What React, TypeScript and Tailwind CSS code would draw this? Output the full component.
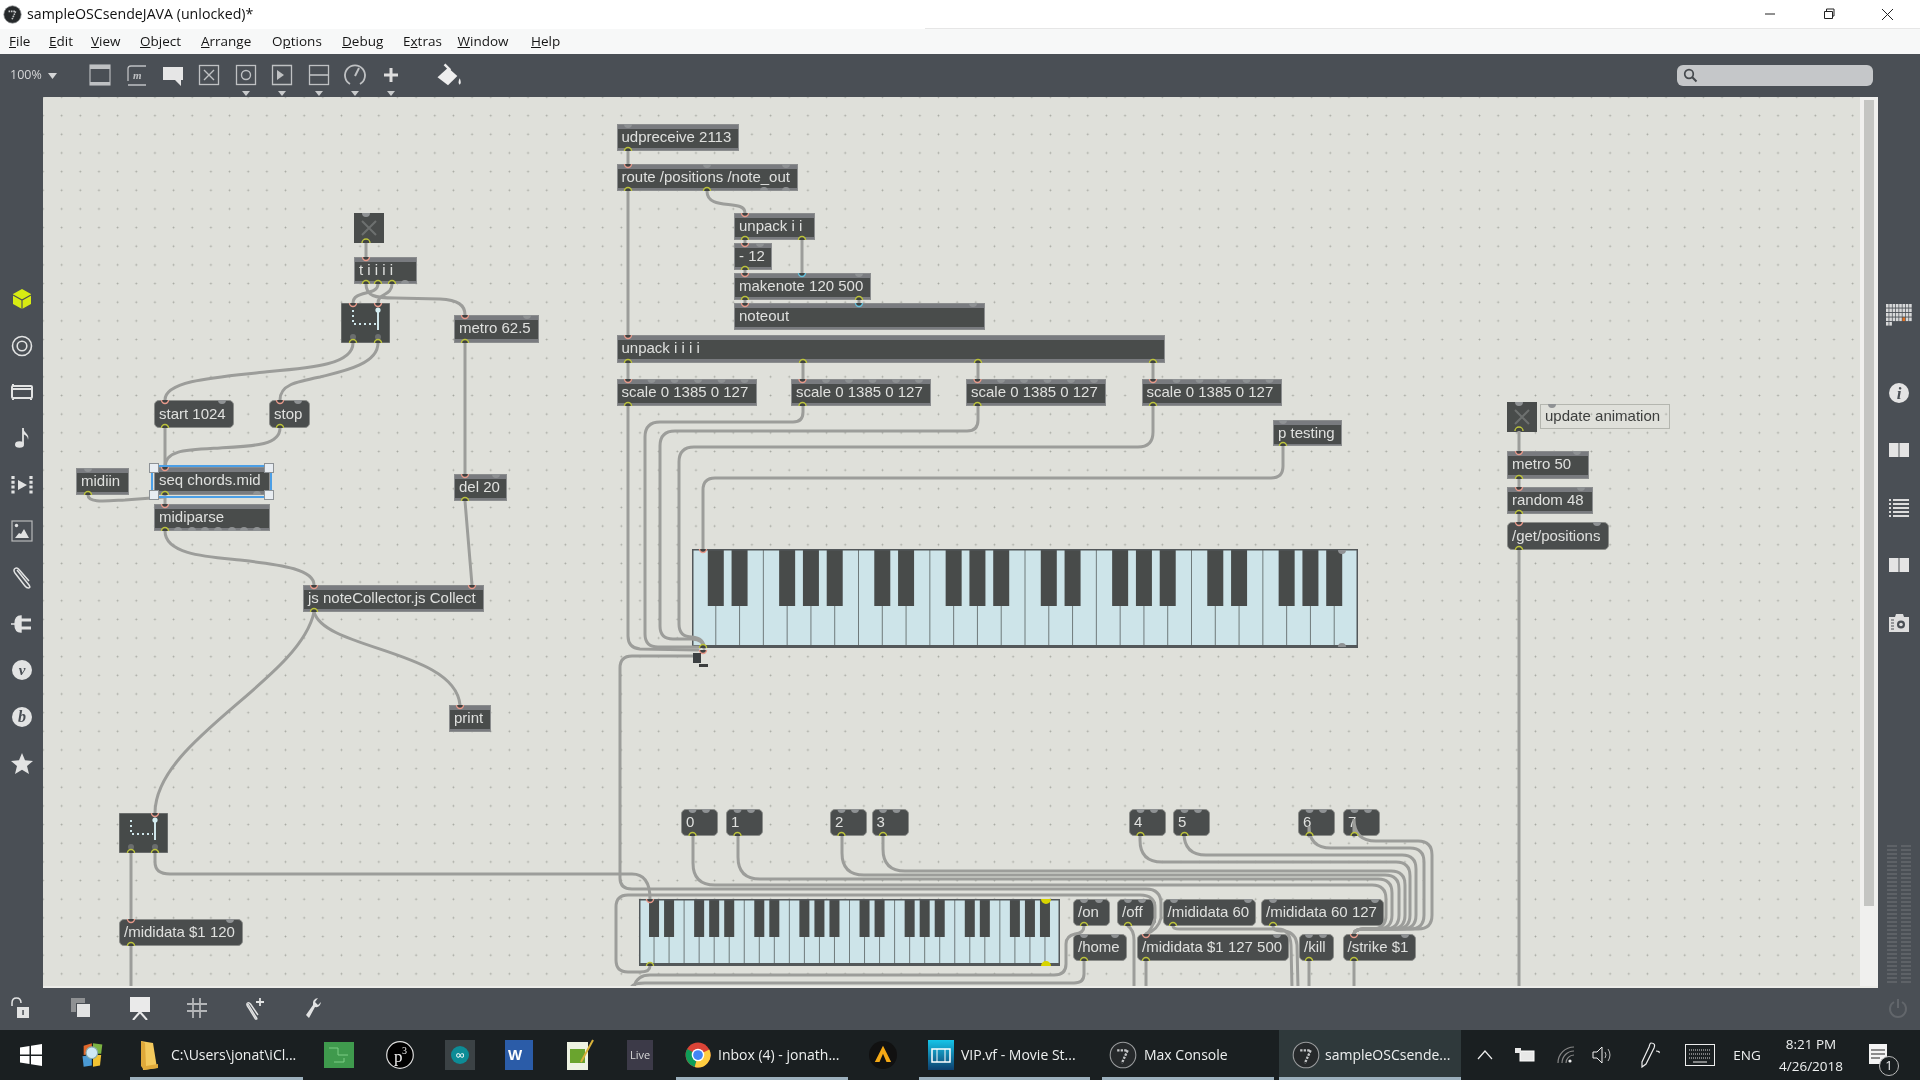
import React from "react";

type N = { t: string; x: number; y: number; r: number; b: number; k?: "o" | "m"; i?: number[]; o?: number[]; gi?: number[]; go?: number[]; cy?: number[] };

const scale = (x: number): N => ({ t: "scale 0 1385 0 127", x, y: 379, r: x + 140, b: 406, i: [x + 11.5], o: [x + 11.5], gi: [35, 58, 81.5, 105, 128].map((d) => x + d) });
const num = (t: string, x: number): N => ({ t, x, y: 809, r: x + 37, b: 836, k: "m", o: [x + 11.5], gi: [x + 11.5, x + 25] });

const nodes: N[] = [
  { t: "t i i i i", x: 354, y: 257, r: 417, b: 284, i: [366], o: [366, 378, 392], go: [405] },
  { t: "metro 62.5", x: 454, y: 315, r: 539, b: 343, i: [465], o: [465], gi: [527] },
  { t: "start 1024", x: 154, y: 400, r: 234, b: 428, k: "m", i: [165], o: [165], gi: [222] },
  { t: "stop", x: 269, y: 400, r: 310, b: 428, k: "m", i: [280], o: [280], gi: [298] },
  { t: "midiin", x: 76, y: 468, r: 129, b: 495, o: [88], gi: [88] },
  { t: "seq chords.mid", x: 154, y: 467, r: 270, b: 495, i: [165], o: [165], go: [257] },
  { t: "midiparse", x: 154, y: 504, r: 270, b: 531, i: [165], o: [165], go: [178, 192, 205, 218, 232, 244, 257] },
  { t: "del 20", x: 454, y: 474, r: 507, b: 501, i: [465], o: [465], gi: [496] },
  { t: "js noteCollector.js Collect", x: 303, y: 585, r: 484, b: 612, i: [314, 472], o: [314] },
  { t: "print", x: 449, y: 705, r: 491, b: 732, i: [460] },
  { t: "udpreceive 2113", x: 616.5, y: 124, r: 738.5, b: 151, o: [628], gi: [628] },
  { t: "route /positions /note_out", x: 616.5, y: 164, r: 797.5, b: 191, i: [628], o: [628, 707], gi: [707, 786], go: [764, 786] },
  { t: "unpack i i", x: 734, y: 213, r: 815, b: 240, i: [745], o: [745, 802] },
  { t: "- 12", x: 734, y: 243, r: 772, b: 270, i: [745], o: [745], gi: [760] },
  { t: "makenote 120 500", x: 734, y: 273, r: 871, b: 300, i: [745], cy: [802], o: [745, 859], gi: [859] },
  { t: "noteout", x: 734, y: 303, r: 985, b: 330, i: [745], cy: [859], gi: [973] },
  { t: "unpack i i i i", x: 616.5, y: 335, r: 1165, b: 363, i: [628], o: [628, 803, 978, 1153] },
  scale(616.5),
  scale(791),
  scale(966),
  scale(1141.5),
  { t: "p testing", x: 1273, y: 420, r: 1342, b: 446, o: [1283], gi: [1283] },
  num("0", 681),
  num("1", 726),
  num("2", 830),
  num("3", 871.5),
  num("4", 1129),
  num("5", 1173),
  num("6", 1298),
  num("7", 1343),
  { t: "/on", x: 1073, y: 899, r: 1109.5, b: 926, k: "m", o: [1084], gi: [1084, 1099] },
  { t: "/off", x: 1117, y: 899, r: 1155.5, b: 926, k: "m", o: [1128], gi: [1128, 1142] },
  { t: "/mididata 60", x: 1162.5, y: 899, r: 1256, b: 926, k: "m", o: [1173], gi: [1174, 1248] },
  { t: "/mididata 60 127", x: 1261, y: 899, r: 1384, b: 926, k: "m", o: [1273], gi: [1273, 1375] },
  { t: "/home", x: 1073, y: 934, r: 1127, b: 961, k: "m", o: [1084], gi: [1084, 1115] },
  { t: "/mididata $1 127 500", x: 1137, y: 934, r: 1289, b: 961, k: "m", i: [1146], o: [1146], gi: [1277] },
  { t: "/kill", x: 1299, y: 934, r: 1334, b: 961, k: "m", o: [1309], gi: [1309, 1323] },
  { t: "/strike $1", x: 1342.5, y: 934, r: 1416, b: 961, k: "m", i: [1354], o: [1354], gi: [1405] },
  { t: "/mididata $1 120", x: 119, y: 919, r: 243, b: 946, k: "m", i: [131], o: [131], gi: [230] },
  { t: "metro 50", x: 1507, y: 451, r: 1589, b: 479, i: [1519], o: [1519], gi: [1577] },
  { t: "random 48", x: 1507, y: 487, r: 1593, b: 514, i: [1519], o: [1519], gi: [1581] },
  { t: "/get/positions", x: 1507, y: 522, r: 1609, b: 550, k: "m", i: [1519], o: [1519], gi: [1597] },
];

const strike = [
  [693, 836, 885, 1386],
  [738, 836, 879, 1392],
  [842, 836, 875, 1399],
  [883, 836, 871, 1405],
  [1140, 836, 862, 1410],
  [1184, 836, 855, 1416],
  [1309, 836, 848, 1424],
  [1354, 836, 841, 1432],
].map(([x, y, h, v]) => `M${x} ${y} L${x} ${h - 22} Q${x} ${h} ${x + 22} ${h} L${v - 14} ${h} Q${v} ${h} ${v} ${h + 14} L${v} 915 Q${v} 929 ${v - 14} 929 L1364 929 Q1354 929 1354 934`);

const wires: string[] = [
  "M366 243 L366 257",
  "M366 284 C366 296 375 298 395 298 L440 299 C458 300 465 305 465 315",
  "M378 284 C378 296 353 290 353 303",
  "M392 284 C392 296 378 293 378 303",
  "M353 343 C353 365 310 368 265 372 C220 377 165 380 165 400",
  "M378 343 C378 365 340 372 320 377 C295 382 280 385 280 400",
  "M165 428 L165 467",
  "M280 428 C280 445 255 446 220 448 C185 450 165 450 165 467",
  "M88 495 C88 503 105 501 125 500 L165 497",
  "M165 495 L165 505",
  "M165 531 C165 555 210 557 240 560 C285 565 314 570 314 585",
  "M465 343 L465 474",
  "M465 501 L472 585",
  "M314 612 C325 650 455 650 460 705",
  "M314 612 C300 680 155 740 155 813",
  "M131 853 L131 919",
  "M131 946 L131 988",
  "M155 853 L155 862 Q155 874 170 874 L632 874 Q650 874 650 899",
  "M628 151 L628 164",
  "M628 191 L628 335",
  "M707 191 C707 212 745 198 745 213",
  "M745 240 L745 243",
  "M745 270 L745 273",
  "M802 240 L802 273",
  "M745 300 L745 303",
  "M859 300 L859 303",
  "M628 363 L628 379",
  "M803 363 L803 379",
  "M978 363 L978 379",
  "M1153 363 L1153 379",
  "M628 406 L628 636 Q628 648 640 649 L698 650",
  "M803 406 L803 412 Q803 422 793 422 L660 422 Q645 422 645 437 L645 634 Q645 647 658 647 L700 647",
  "M978 406 L978 420 Q978 431 967 431 L675 431 Q660 431 660 446 L660 626 Q660 639 673 639 L692 639 Q704 640 704 648",
  "M1153 406 L1153 432 Q1153 447 1138 447 L694 447 Q679 447 679 462 L679 624 Q679 637 692 637 Q704 638 704 648",
  "M1283 446 L1283 466 Q1283 478 1271 478 L715 478 Q703 478 703 490 L703 549",
  "M697 656 L632 656 Q620 656 620 668 L620 878 Q620 889 632 889 L1146 889 Q1161 889 1161 904 L1161 918 Q1158 930 1146 934",
  "M650 966 Q650 972 640 972 L628 972 Q616 972 616 960 L616 907 Q616 895 628 895 L1140 895 Q1155 895 1155 908 L1155 918 Q1152 930 1146 934",
  "M1084 926 Q1084 933 1075 934 Q1066 936 1066 944 L1066 964 Q1066 975 1054 975 L650 975 Q636 975 634 988",
  "M1084 961 L1084 974 Q1084 983 1074 983 L645 983 Q632 983 631 988",
  "M1128 926 Q1134 930 1134 940 L1134 988",
  "M1146 961 L1146 988",
  "M1173 926 Q1173 929 1180 929 L1278 929 Q1290 929 1291 945 L1292 988",
  "M1273 926 Q1273 931 1281 931 L1285 931 Q1296 933 1297 945 L1298 988",
  "M1309 961 L1309 988",
  "M1354 961 L1354 988",
  "M1519 431 L1519 451",
  "M1519 479 L1519 487",
  "M1519 514 L1519 522",
  "M1519 550 L1519 988",
  ...strike,
];

const Box = ({ n }: { n: N }) =>
  n.k === "m" ? (
    <div
      className="absolute flex items-center rounded-[5px] border border-[#8b8d8a] bg-[#4a4d4d] pl-[4px] text-[15px] whitespace-nowrap text-[#dfe0de]"
      style={{ left: n.x - 43, top: n.y - 97, width: n.r - n.x, height: n.b - n.y }}
    >
      {n.t}
    </div>
  ) : (
    <div
      className="absolute flex flex-col border border-[#8b8d8e] bg-[#797b7f] text-[15px] whitespace-nowrap text-[#dfe0de]"
      style={{ left: n.x - 43, top: n.y - 97, width: n.r - n.x, height: n.b - n.y }}
    >
      <div className="mt-[4px] mb-[4px] flex flex-1 items-center bg-[#494c4b] pb-[4px] pl-[4px] leading-none">{n.t}</div>
    </div>
  );

const Piano = ({ x, y, w, h, bh, bw }: { x: number; y: number; w: number; h: number; bh: number; bw: number }) => {
  const kw = w / 28;
  const blacks = [1, 2, 4, 5, 6, 8, 9, 11, 12, 13, 15, 16, 18, 19, 20, 22, 23, 25, 26, 27];
  return (
    <svg className="absolute" style={{ left: x - 43, top: y - 97 }} width={w} height={h}>
      <rect width={w} height={h} fill="#cde4e9" />
      {Array.from({ length: 27 }, (_, i) => (
        <line key={i} x1={(i + 1) * kw} x2={(i + 1) * kw} y1={0} y2={h} stroke="#6f7a7b" strokeWidth={1} />
      ))}
      {blacks.map((b) => (
        <rect key={b} x={b * kw - bw / 2} y={0} width={bw} height={bh} fill="#484b4a" />
      ))}
      <rect x={0.75} y={0.75} width={w - 1.5} height={h - 1.5} fill="none" stroke="#53585a" strokeWidth={1.5} />
      <rect x={0} y={h - 3} width={w} height={3} fill="#53585a" />
    </svg>
  );
};

const Ports = ({ n }: { n: N }) => (
  <>
    {(n.gi || []).map((x, i) => (
      <path key={"gi" + i} d={`M${x - 4} ${n.y} A4 4 0 0 0 ${x + 4} ${n.y}Z`} fill="#8f9294" />
    ))}
    {(n.go || []).map((x, i) => (
      <path key={"go" + i} d={`M${x - 4} ${n.b} A4 4 0 0 1 ${x + 4} ${n.b}Z`} fill="#8f9294" />
    ))}
    {(n.i || []).map((x, i) => (
      <path key={"i" + i} d={`M${x - 3.5} ${n.y} A3.5 3.5 0 0 0 ${x + 3.5} ${n.y}`} fill="#3f4242" stroke="#e89a8b" strokeWidth={1.4} />
    ))}
    {(n.cy || []).map((x, i) => (
      <path key={"c" + i} d={`M${x - 3.5} ${n.y} A3.5 3.5 0 0 0 ${x + 3.5} ${n.y}`} fill="#3f4242" stroke="#66c2dc" strokeWidth={1.4} />
    ))}
    {(n.o || []).map((x, i) => (
      <path key={"o" + i} d={`M${x - 3.5} ${n.b} A3.5 3.5 0 0 1 ${x + 3.5} ${n.b}`} fill="#3f4242" stroke="#bcc33c" strokeWidth={1.4} />
    ))}
  </>
);

const Toggle = ({ x, y, s }: { x: number; y: number; s: number }) => (
  <svg className="absolute" style={{ left: x - 43, top: y - 97 }} width={s} height={s}>
    <rect width={s} height={s} fill="#494c4b" />
    <path d={`M8 8 L${s - 8} ${s - 8} M${s - 8} 8 L8 ${s - 8}`} stroke="#6d706f" strokeWidth={2} />
  </svg>
);

const Gate = ({ x, y, w, h, a, b, stopY }: { x: number; y: number; w: number; h: number; a: number; b: number; stopY: number }) => (
  <svg className="absolute" style={{ left: x - 43, top: y - 97 }} width={w} height={h}>
    <rect width={w} height={h} fill="#464a49" stroke="#8d8f8e" />
    <path d={`M${a} 7 L${a} ${stopY} L${b - 2} ${stopY}`} fill="none" stroke="#cfe6ea" strokeWidth={2} strokeDasharray="2 3" />
    <path d={`M${b} 7 L${b} ${stopY + 6}`} stroke="#cfe6ea" strokeWidth={2} />
    <circle cx={b} cy={7} r={2.6} fill="#d4eef2" />
    <circle cx={a} cy={h - 6} r={3} fill="#6b6e6e" />
    <circle cx={b} cy={h - 6} r={3} fill="#6b6e6e" />
  </svg>
);

const S = (p: { s?: number; w?: number; h?: number; v?: string; children: React.ReactNode }) => (
  <svg width={p.w ?? p.s ?? 24} height={p.h ?? p.s ?? 24} viewBox={p.v ?? "0 0 24 24"} className="shrink-0">
    {p.children}
  </svg>
);

const G = "#bfc1c3";
const toolIcons: { el: React.ReactNode; tri?: boolean }[] = [
  { el: <S><rect x="2" y="2" width="20" height="20" fill="none" stroke={G} strokeWidth="1.1" /><rect x="2" y="2" width="20" height="4" fill={G} /><rect x="2" y="19" width="20" height="3" fill={G} /></S> },
  { el: <S><path d="M3 22 L21 22 M3 18 L3 6 Q3 3 6 3 L21 3" fill="none" stroke={G} strokeWidth="1.3" /><text x="8" y="16" fontSize="11" fontStyle="italic" fontWeight="700" fill={G} fontFamily="Liberation Serif, serif">m</text></S> },
  { el: <S><path d="M2 4 H22 V17 H20 L20 23 L14 17 H2Z" fill="#e6e6e6" /></S> },
  { el: <S><rect x="2.5" y="2.5" width="19" height="19" fill="none" stroke={G} strokeWidth="1.3" /><path d="M7 7 L17 17 M17 7 L7 17" stroke={G} strokeWidth="1.4" /></S> },
  { tri: true, el: <S><rect x="2.5" y="2.5" width="19" height="19" fill="none" stroke={G} strokeWidth="1.3" /><circle cx="12" cy="12" r="4.5" fill="none" stroke={G} strokeWidth="1.4" /></S> },
  { tri: true, el: <S><path d="M21.5 2.5 H2.5 V21.5 H21.5Z" fill="none" stroke={G} strokeWidth="1.3" /><path d="M7 7 L14 12 L7 17Z" fill={G} /></S> },
  { tri: true, el: <S><rect x="2.5" y="2.5" width="19" height="19" fill="none" stroke={G} strokeWidth="1.3" /><path d="M2.5 12 H21.5" stroke={G} strokeWidth="1.6" /></S> },
  { tri: true, el: <S><path d="M7 21 A10 10 0 1 1 17 21" fill="none" stroke={G} strokeWidth="1.8" /><path d="M12 13 L16 5" stroke={G} strokeWidth="2" /></S> },
  { tri: true, el: <S><path d="M12 5 V19 M5 12 H19" stroke="#dedede" strokeWidth="3" /></S> },
];

const side = "#e2e3e3";
const leftIcons: React.ReactNode[] = [
  <S key="a"><path d="M12 2 L21 7 V17 L12 22 L3 17 V7Z" fill="#d8ec12" /><path d="M3 8 L12 13 L21 8 M12 13 V22" stroke="#4a4f55" strokeWidth="1.1" fill="none" /></S>,
  <S key="b"><circle cx="12" cy="12" r="9.5" fill="none" stroke={side} strokeWidth="1.6" /><circle cx="12" cy="12" r="4.8" fill="none" stroke={side} strokeWidth="1.6" /></S>,
  <S key="c"><rect x="2" y="6" width="20" height="12" rx="1" fill="none" stroke={side} strokeWidth="2" /><path d="M2 9 H22" stroke={side} strokeWidth="2" /><path d="M3 4 L3 6 M21 19 L21 20 M3 19 L3 20" stroke={side} strokeWidth="2" /></S>,
  <S key="d"><path d="M13 2 V18" stroke={side} strokeWidth="1.8" /><ellipse cx="9.5" cy="18.5" rx="4.5" ry="3.3" fill={side} /><path d="M13 2 C14 7 20 8 18 14 C18 10 15 9 13 8Z" fill={side} /></S>,
  <S key="e"><path d="M3 3 V21 M21 3 V21" stroke={side} strokeWidth="3.2" strokeDasharray="3 1.8" /><path d="M8 7 L17 12 L8 17Z" fill={side} /></S>,
  <S key="f"><rect x="2" y="2" width="20" height="20" fill="none" stroke="#b8b9ba" strokeWidth="1.2" /><circle cx="6.5" cy="6.5" r="1.7" fill={side} /><path d="M5 19 L9 14 L11 15 L14 10 L19 19Z" fill={side} /></S>,
  <S key="g"><path d="M6 5 L18 20 Q20 23 17.5 23 Q15.5 23 14 21 L4 8 Q2 5 4 3.5 Q6 2 8 4.5 L18 16" fill="none" stroke={side} strokeWidth="1.5" transform="translate(1 -1)" /></S>,
  <S key="h"><path d="M1 12 H6 M11 4 V20 Q5 20 5 12 Q5 4 11 4Z" fill={side} stroke={side} strokeWidth="1.4" /><path d="M11 8 H21 M11 16 H21" stroke={side} strokeWidth="3" /></S>,
  <S key="i"><circle cx="12" cy="12" r="10" fill={side} /><text x="12" y="17" textAnchor="middle" fontSize="15" fontStyle="italic" fontWeight="700" fill="#4a4f55" fontFamily="Liberation Serif, serif">v</text></S>,
  <S key="j"><circle cx="12" cy="12" r="10" fill={side} /><text x="12" y="17" textAnchor="middle" fontSize="16" fontStyle="italic" fontWeight="700" fill="#4a4f55" fontFamily="Liberation Serif, serif">b</text></S>,
  <S key="k"><path d="M12 2 L15 9.3 L23 10 L17 15 L19 23 L12 18.7 L5 23 L7 15 L1 10 L9 9.3Z" fill={side} /></S>,
];

const Book = () => (
  <S><path d="M2 5 H11 V19 H2Z M13 5 H22 V19 H13Z" fill="#e4e4e4" /><rect x="11" y="5" width="2" height="14" fill="#9a9c9e" /></S>
);

const rightIcons: React.ReactNode[] = [
  <S key="in"><circle cx="12" cy="12" r="10" fill="#e4e4e4" /><text x="12" y="18" textAnchor="middle" fontSize="17" fontStyle="italic" fontWeight="700" fill="#4a4f55" fontFamily="Liberation Serif, serif">i</text></S>,
  <Book key="b1" />,
  <S key="l"><path d="M6 4 H22 M6 8 H22 M6 12 H22 M6 16 H22 M6 20 H22" stroke="#dcdcdc" strokeWidth="1.8" /><path d="M2 4 H4 M2 8 H4 M2 12 H4 M2 16 H4 M2 20 H4" stroke="#dcdcdc" strokeWidth="1.8" /></S>,
  <Book key="b2" />,
  <S key="c"><path d="M2 6 H8 L9 3 H16 L17 6 H22 V21 H2Z" fill="#dedede" /><circle cx="14" cy="13.5" r="4" fill="#4a4f55" /><circle cx="14" cy="13.5" r="1.8" fill="#dedede" /><path d="M4 9 H7 M4 12 H7 M4 15 H7 M4 18 H7" stroke="#4a4f55" strokeWidth="1.2" /></S>,
];

const bottomIcons: { c: string; el: React.ReactNode }[] = [
  { c: "", el: <S><path d="M3 10 V7 Q3 2 7.5 2 Q12 2 12 7" fill="none" stroke={side} strokeWidth="1.5" /><rect x="8" y="11" width="12" height="11" fill={side} /><rect x="13.3" y="14" width="1.5" height="5" fill="#4a4f55" /></S> },
  { c: "ml-[36px]", el: <S><rect x="2" y="2" width="14" height="14" fill="#8f9193" /><rect x="7.5" y="7.5" width="14" height="14" fill={side} stroke="#4a4f55" /></S> },
  { c: "ml-[35px]", el: <S><rect x="2" y="1" width="20" height="15" fill="#eaeaea" /><path d="M12 16 L5 24 M12 16 L19 24" stroke="#eaeaea" strokeWidth="2" /></S> },
  { c: "ml-[33px]", el: <S><path d="M8 2 V22 M15 2 V22 M2 8 H22 M2 15 H22" stroke="#b4b6b8" strokeWidth="1.8" /></S> },
  { c: "ml-[33px]", el: <S><path d="M6 8 L14 21 Q16 23.5 13.5 23 L6 11 Q4 8 5.5 7 Q7 6 8.5 8 L16 19" fill="none" stroke={side} strokeWidth="1.4" /><path d="M18 2 V10 M14 6 H22" stroke={side} strokeWidth="1.8" /></S> },
  { c: "ml-[34px]", el: <S><path d="M9 22 L6 19 L13 9 Q12 3 18 2 L15 6 L18 9 L21 6 Q20 12 15 11Z" fill={side} /></S> },
];

const MaxLogo = ({ s = 28 }: { s?: number }) => (
  <S s={s}>
    <circle cx="12" cy="12" r="11" fill="#26292b" stroke="#9a9c9e" strokeWidth="0.9" />
    <path d="M7 8 H16 L11 19" fill="none" stroke="#c4c6c8" strokeWidth="2" strokeDasharray="2 1" />
  </S>
);

const Chrome = () => (
  <S s={26}>
    <circle cx="12" cy="12" r="11.5" fill="#db4437" />
    <path d="M12 12 L2 6.5 A11.5 11.5 0 0 0 9 23Z" fill="#0f9d58" />
    <path d="M12 12 L22.5 7 A11.5 11.5 0 0 1 9 23Z" fill="#ffcd40" />
    <circle cx="12" cy="12" r="5.8" fill="#fff" />
    <circle cx="12" cy="12" r="4.5" fill="#4285f4" />
  </S>
);

const Task = ({ c, children, label }: { c: string; children: React.ReactNode; label?: string }) => (
  <div className={`flex h-full shrink-0 items-center ${c}`}>
    {children}
    {label && <span className="whitespace-nowrap">{label}</span>}
  </div>
);

const menu: [string, string, string][] = [
  ["", "F", "ile"],
  ["", "E", "dit"],
  ["", "V", "iew"],
  ["", "O", "bject"],
  ["", "A", "rrange"],
  ["O", "p", "tions"],
  ["", "D", "ebug"],
  ["E", "x", "tras"],
  ["", "W", "indow"],
  ["", "H", "elp"],
];
const menuWidths = ["w-[40px]", "w-[42px]", "w-[49px]", "w-[61px]", "w-[71px]", "w-[70px]", "w-[61px]", "w-[54.5px]", "w-[73.5px]", "w-[40px]"];

export default function App() {
  return (
    <div className="flex h-[1080px] w-[1920px] flex-col overflow-hidden bg-white font-['Open_Sans','Noto_Sans',sans-serif] blur-[0.4px]">
      <div className="flex h-[28px] shrink-0 items-center bg-white pl-[3px] text-[14.2px] text-[#111]">
        <MaxLogo s={19} />
        <span className="ml-[5px] whitespace-nowrap">sampleOSCsendeJAVA (unlocked)*</span>
        <div className="ml-auto flex items-center">
          <svg width="12" height="12" className="mr-[47px]"><path d="M1 6 H11" stroke="#222" /></svg>
          <svg width="12" height="12" className="mr-[46px]"><path d="M1.5 3.5 H9.5 V10.5 H1.5Z M3.5 3 V1 H11 V8 H10" fill="none" stroke="#222" /></svg>
          <svg width="13" height="13" className="mr-[26px]"><path d="M1 1 L12 12 M12 1 L1 12" stroke="#222" /></svg>
        </div>
      </div>
      <div className="flex h-[26px] shrink-0 flex-col bg-[#f7f8f8]">
        <div className="flex h-px shrink-0">
          <div className="w-[925px] bg-white" />
          <div className="flex-1 bg-[#e6e6e6]" />
        </div>
        <div className="flex flex-1 items-center pl-[9px] text-[13.5px] text-[#151515]">
          {menu.map(([a, u, b], i) => (
            <div key={i} className={menuWidths[i]}>
              {a}
              <span className="underline">{u}</span>
              {b}
            </div>
          ))}
        </div>
      </div>
      <div className="flex h-[43px] shrink-0 bg-[#4a4f55]">
        <div className="flex w-[82px] items-center pl-[10px] text-[12.5px] text-[#d5d6d7]">
          100%
          <svg width="9" height="6" className="ml-[6px]"><path d="M0 0 H9 L4.5 6Z" fill="#d5d6d7" /></svg>
        </div>
        {toolIcons.map((t, i) => (
          <div key={i} className="flex h-full w-[36.4px] flex-col items-center pt-[9px]">
            {t.el}
            {t.tri && <svg width="8" height="5" className="mt-[4px]"><path d="M0 0 H8 L4 5Z" fill="#c9cbcc" /></svg>}
          </div>
        ))}
        <div className="ml-[20px] flex w-[36px] items-center justify-center">
          <S s={28}><path d="M3 13 L12 5 L20 12 L12 20Z" fill="#eee" /><path d="M9 2 L14 7" stroke="#eee" strokeWidth="2" /><path d="M22 14 Q24 18 22 19.5 Q20 18 22 14Z" fill="#eee" /></S>
        </div>
        <div className="mt-[11px] mr-[47px] ml-auto flex h-[21px] w-[196px] items-center rounded-[6px] bg-[#c5c7c9] pl-[6px]">
          <svg width="15" height="15" viewBox="0 0 15 15"><circle cx="6" cy="6" r="4.3" fill="none" stroke="#45494d" strokeWidth="1.7" /><path d="M9.3 9.3 L13.5 13.5" stroke="#45494d" strokeWidth="2" /></svg>
        </div>
      </div>
      <div className="flex h-[891px] shrink-0">
        <div className="flex w-[43px] shrink-0 flex-col items-center bg-[#4a4f55] pt-[179px]">
          {leftIcons.map((ic, i) => (
            <div key={i} className="flex h-[46.4px] items-center justify-center">{ic}</div>
          ))}
        </div>
        <div className="relative flex-1 overflow-hidden border-b-2 border-[#ecece8] bg-[#dfe0da] bg-[radial-gradient(circle,#a4a69f_0.8px,transparent_1.1px)] bg-[size:18.67px_18.67px] bg-[position:-9.33px_-9.33px] font-['Liberation_Sans',Arial,sans-serif]">
          {nodes.map((n, i) => (
            <Box key={i} n={n} />
          ))}
          <Toggle x={354} y={213} s={30} />
          <Toggle x={1507} y={402} s={30} />
          <Gate x={341} y={303} w={49} h={40} a={12} b={37} stopY={21} />
          <Gate x={119} y={813} w={49} h={40} a={12} b={36} stopY={21} />
          <Piano x={692} y={549} w={666} h={99} bh={57} bw={16} />
          <Piano x={639} y={899} w={421} h={67} bh={38} bw={10} />
          <div className="absolute left-[1497px] top-[307px] flex h-[25px] w-[130px] items-center border border-[#b4b6af] pl-[4px] text-[15px] whitespace-nowrap text-[#3c3e3d]">
            update animation
          </div>
          <div className="absolute top-0 right-0 bottom-0 w-[18px] bg-[#f0f0ee] pt-[3px] pl-[4px]">
            <div className="h-[806px] w-[10px] bg-[#c4c5c2]" />
          </div>
          <svg className="absolute top-0 left-0" width={1835} height={891} viewBox="43 97 1835 891">
            <g fill="none" stroke="#9c9d9a" strokeWidth={3} strokeLinecap="round">
              {wires.map((d, i) => (
                <path key={i} d={d} />
              ))}
            </g>
            {nodes.map((n, i) => (
              <Ports key={i} n={n} />
            ))}
            <path d="M362 213 A4 4 0 0 0 370 213Z M1515 402 A4 4 0 0 0 1523 402Z M1548 404 A4 4 0 0 0 1556 404Z M1338 550 A4 4 0 0 0 1346 550Z M1338 647 A4 4 0 0 1 1346 647Z" fill="#8f9294" />
            <path d="M362 243 A3.5 3.5 0 0 1 370 243 M1515 431 A3.5 3.5 0 0 1 1523 431 M349.5 343 A3.5 3.5 0 0 1 356.5 343 M374.5 343 A3.5 3.5 0 0 1 381.5 343 M127.5 853 A3.5 3.5 0 0 1 134.5 853 M151.5 853 A3.5 3.5 0 0 1 158.5 853 M699.5 648 A3.5 3.5 0 0 1 706.5 648 M646.5 966 A3.5 3.5 0 0 1 653.5 966" fill="#3f4242" stroke="#bcc33c" strokeWidth={1.4} />
            <path d="M349.5 303 A3.5 3.5 0 0 0 356.5 303 M374.5 303 A3.5 3.5 0 0 0 381.5 303 M151.5 813 A3.5 3.5 0 0 0 158.5 813 M699.5 549 A3.5 3.5 0 0 0 706.5 549 M699.5 650 A3.5 3.5 0 0 0 706.5 650 M646.5 899 A3.5 3.5 0 0 0 653.5 899" fill="#3f4242" stroke="#e89a8b" strokeWidth={1.4} />
            <path d="M1041 899 A5 5 0 0 0 1051 899Z M1041 966 A5 5 0 0 1 1051 966Z" fill="#d8d400" />
            <rect x="693" y="653" width="8" height="10" fill="#3c4042" />
            <rect x="699" y="664" width="9" height="3" fill="#3c3e3e" />
            <rect x="152" y="466" width="119" height="31" fill="none" stroke="#4c9fe6" strokeWidth="2" />
            {[[154, 468], [269, 468], [154, 495], [269, 495]].map(([x, y], i) => (
              <rect key={i} x={x - 4.5} y={y - 4.5} width={9} height={9} fill="#e8edf2" stroke="#8d9296" />
            ))}
          </svg>
        </div>
        <div className="flex w-[42px] shrink-0 flex-col items-center bg-[#4a4f55] pt-[191px]">
          <div className="flex h-[57.5px] items-center justify-center">
            <svg width="26" height="26" viewBox="0 0 26 26">
              {Array.from({ length: 40 }, (_, i) => {
                const c = i % 8;
                const r = Math.floor(i / 8);
                if (r === 4 && c > 1) return null;
                return <rect key={i} x={c * 3.3} y={r * 4.5} width={2.6} height={3.6} fill={i === 29 ? "#e07020" : "#d8d9da"} />;
              })}
            </svg>
          </div>
          <div className="h-[18.5px] shrink-0" />
          {rightIcons.map((ic, i) => (
            <div key={i} className="flex h-[57.5px] shrink-0 items-center justify-center">{ic}</div>
          ))}
          <div className="mt-auto mb-[3px] flex h-[140px] w-[24px] justify-between">
            <div className="w-[10px] bg-[repeating-linear-gradient(180deg,#5e6267_0,#5e6267_2px,#4a4f55_2px,#4a4f55_4px)]" />
            <div className="w-[10px] bg-[repeating-linear-gradient(180deg,#5e6267_0,#5e6267_2px,#4a4f55_2px,#4a4f55_4px)]" />
          </div>
        </div>
      </div>
      <div className="flex h-[42px] shrink-0 items-center bg-[#4a4f55] pb-[2px] pl-[9px]">
        {bottomIcons.map((b, i) => (
          <div key={i} className={b.c}>{b.el}</div>
        ))}
        <svg width="20" height="22" viewBox="0 0 20 22" className="mr-[12px] ml-auto">
          <path d="M6 5 A8 8 0 1 0 14 5 M10 2 V11" fill="none" stroke="#62666b" strokeWidth="2" />
        </svg>
      </div>
      <div className="flex h-[50px] shrink-0 items-center bg-[#1a1f21] text-[14px] text-[#eef0f0]">
        <Task c="w-[62px] justify-center">
          <svg width="22" height="22" viewBox="0 0 22 22"><path d="M0 3.5 L9.5 2 V10.5 H0Z M11 1.8 L22 0 V10.5 H11Z M0 12 H9.5 V20 L0 18.5Z M11 12 H22 V22 L11 20.2Z" fill="#fff" /></svg>
        </Task>
        <Task c="w-[62px] justify-center">
          <S s={28}>
            <path d="M4 4 L11 2 V11 L4 12Z" fill="#e0672a" /><path d="M12 2 L20 3 L19 11 L12 11Z" fill="#7cb342" /><path d="M3 13 L11 12 V21 L4 22Z" fill="#4a9ad4" /><path d="M12 12 H19 L18 21 L12 22Z" fill="#f1c232" />
            <circle cx="11" cy="10" r="5" fill="#cfe8f5" stroke="#8aa" />
          </S>
        </Task>
        <Task c="ml-[6px] w-[173px] gap-[12px] border-b-[3px] border-[#9cb0bd] pt-[2px] pl-[11px]" label="C:\Users\jonat\iCl...">
          <svg width="18" height="30" viewBox="0 0 18 30"><path d="M0 1 L12 3 L16 28 L2 30Z" fill="#f4c95d" /><path d="M0 1 V26 L3 30 L17 28 L17 24 L5 26 L4 3Z" fill="#e0a93a" /></svg>
        </Task>
        <Task c="w-[72px] justify-center">
          <svg width="30" height="26"><rect width="30" height="26" fill="#3f9a4d" /><path d="M5 6 H14 V13 H24 M10 20 H20 V16" stroke="#7ccd85" fill="none" /></svg>
        </Task>
        <Task c="w-[50px] justify-center">
          <svg width="28" height="28" viewBox="0 0 28 28"><circle cx="14" cy="14" r="13.3" fill="#000" stroke="#dcdcdc" strokeWidth="1.2" /><text x="8" y="21" fontSize="17" fill="#eee" fontFamily="Liberation Serif, serif">p</text><text x="16" y="13" fontSize="10" fill="#eee" fontFamily="Liberation Serif, serif">3</text></svg>
        </Task>
        <Task c="w-[70px] justify-center">
          <div className="flex h-[30px] w-[30px] items-center justify-center bg-[#3b4245]">
            <div className="flex h-[18px] w-[18px] items-center justify-center rounded-full bg-[#0d8c96] text-[13px] leading-none text-white">∞</div>
          </div>
        </Task>
        <Task c="w-[48px] justify-center">
          <div className="flex h-[30px] w-[28px] items-center bg-[#2b5ca8] pl-[3px] font-['Liberation_Sans',sans-serif] text-[15px] font-bold text-white">W</div>
        </Task>
        <Task c="w-[74px] justify-center">
          <svg width="28" height="32" viewBox="0 0 28 32"><rect x="1" y="3" width="21" height="28" fill="#eef3e2" /><rect x="4" y="10" width="15" height="14" fill="#6aa42e" /><path d="M27 1 L15 23" stroke="#d9b23a" strokeWidth="2" /></svg>
        </Task>
        <Task c="w-[46px] justify-center">
          <div className="flex h-[30px] w-[26px] items-center justify-center bg-[#3c3a48] text-[11px] text-[#d8d8d8]">Live</div>
        </Task>
        <Task c="ml-[13px] w-[172px] gap-[7px] border-b-[3px] border-[#9cb0bd] pt-[2px] pl-[9px]" label="Inbox (4) - jonath...">
          <Chrome />
        </Task>
        <Task c="w-[70px] justify-center">
          <svg width="28" height="28" viewBox="0 0 24 24"><circle cx="12" cy="12" r="12" fill="#111" /><path d="M12 4 L19 18 H15 L12 11 L9 18 H5Z" fill="#f5a915" /></svg>
        </Task>
        <Task c="ml-[1px] w-[171px] gap-[7px] border-b-[3px] border-[#9cb0bd] pt-[2px] pl-[9px]" label="VIP.vf - Movie St...">
          <svg width="26" height="30" viewBox="0 0 26 30"><defs><linearGradient id="vg" x1="0" y1="0" x2="0" y2="1"><stop offset="0" stopColor="#16c4e8" /><stop offset="1" stopColor="#0d3f6e" /></linearGradient></defs><rect width="26" height="30" fill="url(#vg)" /><rect x="4" y="9" width="18" height="13" fill="none" stroke="#fff" strokeWidth="1.5" /><path d="M9 9 V22 M17 9 V22" stroke="#fff" /></svg>
        </Task>
        <Task c="ml-[12px] w-[171.5px] gap-[7px] border-b-[3px] border-[#9cb0bd] pt-[2px] pl-[7px]" label="Max Console">
          <MaxLogo />
        </Task>
        <Task c="ml-[5.5px] w-[182px] gap-[5px] border-b-[3px] border-[#9cb0bd] bg-[#2f393b] pt-[2px] pl-[13px]" label="sampleOSCsende...">
          <MaxLogo />
        </Task>
        <Task c="w-[48px] justify-center">
          <svg width="16" height="10"><path d="M1 9 L8 1 L15 9" fill="none" stroke="#eee" strokeWidth="1.2" /></svg>
        </Task>
        <Task c="w-[32px] justify-center">
          <svg width="20" height="16"><rect x="5" y="4" width="14" height="10" fill="#e8e8e8" stroke="#fff" /><rect x="0" y="1" width="6" height="5" fill="#e8e8e8" /></svg>
        </Task>
        <Task c="w-[50px] justify-center">
          <svg width="18" height="18" viewBox="0 0 18 18"><path d="M1 17 A16 16 0 0 1 17 1 M5 17 A12 12 0 0 1 17 5 M9 17 A8 8 0 0 1 17 9" fill="none" stroke="#888" strokeWidth="1.2" /><circle cx="13" cy="15" r="1.6" fill="#eee" /></svg>
        </Task>
        <Task c="w-[24px] justify-center">
          <svg width="22" height="20" viewBox="0 0 22 20"><path d="M1 7 H5 L10 2 V18 L5 13 H1Z" fill="none" stroke="#eee" /><path d="M13 7 Q15 10 13 13 M16 4 Q20 10 16 16" fill="none" stroke="#bbb" /></svg>
        </Task>
        <Task c="w-[70px] justify-center">
          <svg width="22" height="26" viewBox="0 0 22 26"><path d="M12 1 Q17 1 15 6 L7 22 L3 25 L3 20 L10 5 Q11 1 12 1 M17 9 Q21 9 20 11" fill="none" stroke="#eee" strokeWidth="1.2" /></svg>
        </Task>
        <Task c="w-[30px] justify-center">
          <svg width="30" height="22"><rect x="0.5" y="0.5" width="29" height="21" fill="none" stroke="#eee" /><path d="M4 6 H26 M4 10 H26 M4 14 H26" stroke="#ddd" strokeDasharray="1 1" /><path d="M8 18 H22" stroke="#eee" /></svg>
        </Task>
        <Task c="w-[64px] justify-center text-[13.5px]" label="ENG">
          <></>
        </Task>
        <div className="flex h-full w-[64px] shrink-0 flex-col items-center justify-center gap-[4px] text-[13.5px] leading-[18px] whitespace-nowrap">
          <div>8:21 PM</div>
          <div>4/26/2018</div>
        </div>
        <div className="relative flex h-full w-[70px] shrink-0 items-center justify-center">
          <svg width="20" height="24"><rect x="1" y="1" width="18" height="20" fill="#f4f4f4" /><path d="M3 7 H17 M3 11 H17 M3 15 H12" stroke="#222" strokeWidth="1.2" /></svg>
          <div className="absolute top-[26px] left-[36px] flex h-[20px] w-[20px] items-center justify-center rounded-full border border-[#bbb] bg-[#1a1f21] text-[13px]">1</div>
        </div>
      </div>
    </div>
  );
}
